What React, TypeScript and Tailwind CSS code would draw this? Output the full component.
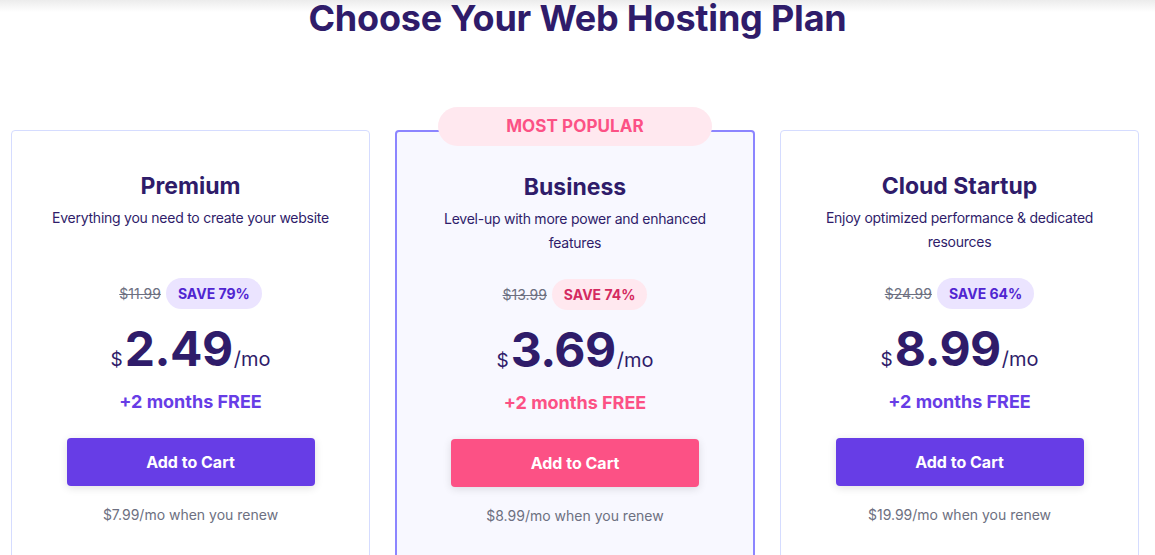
import React from "react";

type Plan = {
  name: string;
  desc: string;
  old: string;
  save: string;
  price: string;
  renew: string;
  popular?: boolean;
};

const plans: Plan[] = [
  {
    name: "Premium",
    desc: "Everything you need to create your website",
    old: "$11.99",
    save: "SAVE 79%",
    price: "2.49",
    renew: "$7.99/mo when you renew",
  },
  {
    name: "Business",
    desc: "Level-up with more power and enhanced features",
    old: "$13.99",
    save: "SAVE 74%",
    price: "3.69",
    renew: "$8.99/mo when you renew",
    popular: true,
  },
  {
    name: "Cloud Startup",
    desc: "Enjoy optimized performance & dedicated resources",
    old: "$24.99",
    save: "SAVE 64%",
    price: "8.99",
    renew: "$19.99/mo when you renew",
  },
];

function Card({ p }: { p: Plan }) {
  const pop = !!p.popular;
  return (
    <div
      className={
        pop
          ? "relative rounded-[4px] border-2 border-[#8c85ff] bg-[#f8f8ff] h-[440px] flex flex-col items-center px-[20px] pt-[39px]"
          : "relative rounded-[4px] border border-[#d5dcff] bg-white h-[440px] flex flex-col items-center px-[20px] pt-[39px]"
      }
    >
      {pop && (
        <div className="absolute left-1/2 -translate-x-1/2 -top-[25px] w-[274px] h-[39px] rounded-full bg-[#ffe8ef] flex items-center justify-center text-[17px] font-bold text-[#fc5185] tracking-[0.1px]">
          MOST POPULAR
        </div>
      )}
      <div className="text-[23px] leading-[32px] font-bold text-[#2f1c6a]">{p.name}</div>
      <div className="mt-[4px] h-[48px] text-[14px] leading-[24px] tracking-[-0.25px] text-[#2f1c6a] text-center max-w-[300px]">
        {p.desc}
      </div>
      <div className="mt-[24px] flex items-center gap-[5px] h-[31px]">
        <span className="text-[14px] text-[#6d7081] line-through">{p.old}</span>
        <span
          className={
            pop
              ? "h-[31px] px-[12px] rounded-full bg-[#ffe8ef] text-[#d42a5f] text-[14px] font-bold flex items-center"
              : "h-[31px] px-[12px] rounded-full bg-[#ebe4ff] text-[#5025d1] text-[14px] font-bold flex items-center"
          }
        >
          {p.save}
        </span>
      </div>
      <div className="mt-[16px] h-[48px] flex items-baseline text-[#2f1c6a] leading-[48px]">
        <span className="text-[19px] leading-[48px] mr-[2px]">$</span>
        <span className="text-[48px] leading-[48px] font-bold tracking-[-0.5px]">{p.price}</span>
        <span className="text-[20px] leading-[48px] ml-[1px]">/mo</span>
      </div>
      <div
        className={
          pop
            ? "mt-[15px] text-[18px] leading-[28px] font-bold text-[#fc5185]"
            : "mt-[15px] text-[18px] leading-[28px] font-bold text-[#673de6]"
        }
      >
        +2 months FREE
      </div>
      <button
        className={
          pop
            ? "mt-[22px] w-[248px] h-[48px] rounded-[4px] bg-[#fc5185] text-white text-[16px] font-bold shadow-[0_2px_8px_rgba(0,0,0,0.12)]"
            : "mt-[22px] w-[248px] h-[48px] rounded-[4px] bg-[#673de6] text-white text-[16px] font-bold shadow-[0_2px_8px_rgba(0,0,0,0.12)]"
        }
      >
        Add to Cart
      </button>
      <div className="mt-[19px] text-[14px] leading-[20px] text-[#6d7081]">{p.renew}</div>
    </div>
  );
}

export default function App() {
  return (
    <div
      className="relative w-[1155px] h-[555px] overflow-hidden bg-white"
      style={{ fontFamily: "Inter, 'Noto Sans', sans-serif" }}
    >
      <div className="absolute top-0 left-0 right-0 h-[12px] bg-gradient-to-b from-[#ececec] to-white" />
      <h1 className="relative text-center text-[36px] leading-[36px] font-bold text-[#2f1c6a] tracking-[-0.2px]">
        Choose Your Web Hosting Plan
      </h1>
      <div className="mt-[94px] ml-[11px] grid grid-cols-[359px_360px_359px] gap-[25px]">
        {plans.map((p) => (
          <Card key={p.name} p={p} />
        ))}
      </div>
    </div>
  );
}
